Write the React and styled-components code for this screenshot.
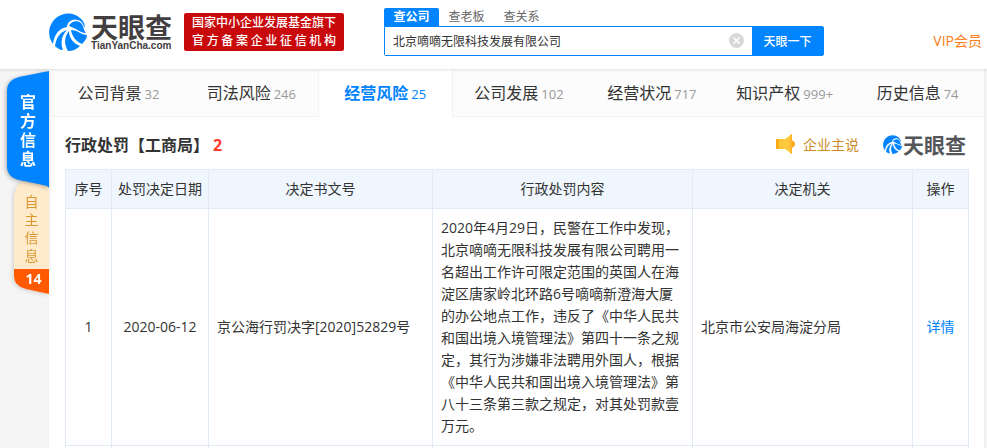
import styled, { createGlobalStyle } from "styled-components";

const GlobalStyle = createGlobalStyle`
* {
box-sizing: border-box;
}
body {
margin: 0;
background-color: #f5f5f5;
color: #333;
font-family: "Open Sans", "Noto Sans CJK SC", sans-serif;
font-size: 14px;
text-spacing-trim: space-all;
}
button, input {
font-family: inherit;
}
a {
text-decoration: none;
}
`;

const Page = styled.div`
min-height: 100vh;
display: flex;
flex-direction: column;
overflow: hidden;
`;

const Header = styled.header`
display: flex;
align-items: flex-start;
height: 69px;
padding: 8px 5px 0 49px;
background-color: white;
box-shadow: 0 1px 3px rgba(0, 0, 0, 0.12);
position: relative;
`;

const Logo = styled.a`
display: flex;
align-items: center;
gap: 4px;
height: 48px;
color: #433e3f;
`;

const LogoText = styled.span`
display: flex;
flex-direction: column;
`;

const LogoName = styled.span`
font-family: "Noto Sans CJK SC", sans-serif;
font-weight: 700;
font-size: ${props=>props.$size}px;
line-height: ${props=>props.$size}px;
`;

const LogoDomain = styled.span`
font-family: "Liberation Sans", sans-serif;
font-weight: 700;
font-size: 10px;
line-height: 12px;
`;

const Backing = styled.div`
width: 160px;
height: 38px;
margin: 5px 40px 0 12px;
padding: 1px 8px;
border-radius: 2px;
background-color: #c90a0d;
color: white;
font-size: 12px;
font-weight: 500;
line-height: 18px;
text-align-last: justify;
white-space: nowrap;
`;

const Search = styled.form`
width: 440px;
`;

const SearchTabs = styled.div`
display: flex;
`;

const SearchTab = styled.button`
width: 55px;
height: 18px;
padding: 0;
border: none;
border-radius: 2px 2px 0 0;
font-size: 12px;
line-height: 18px;
font-weight: ${props=>props.$active ? 700 : 400};
color: ${props=>props.$active ? "white" : "#666"};
background-color: ${props=>props.$active ? "#0084ff" : "transparent"};
`;

const SearchBar = styled.div`
display: flex;
height: 30px;
border: 1px solid #0084ff;
border-radius: 0 2px 2px 2px;
`;

const SearchInput = styled.input`
flex: 1;
min-width: 0;
padding: 0 8px;
border: none;
outline: none;
font-size: 12px;
color: #333;
`;

const ClearButton = styled.button`
display: flex;
align-items: center;
padding: 0 8px 2px 0;
border: none;
background: none;
`;

const SearchButton = styled.button`
width: 71px;
padding: 0;
border: none;
background-color: #0084ff;
color: white;
font-size: 12px;
font-weight: 500;
`;

const VipLink = styled.a`
margin: 22px 0 0 auto;
line-height: 22px;
color: #ff7d18;
`;

const Body = styled.div`
flex: 1;
display: flex;
padding-right: 2px;
`;

const Side = styled.aside`
width: 49px;
padding-top: 2px;
display: flex;
flex-direction: column;
align-items: flex-end;
`;

const TabShadow = styled.div`
position: relative;
z-index: ${props=>props.$front ? 1 : 0};
margin-top: ${props=>props.$front ? "0" : "-8px"};
filter: drop-shadow(-1px 1px 2px rgba(0, 0, 0, ${props=>props.$front ? 0.3 : 0.15}));
`;

const OfficialTab = styled.a`
width: 42px;
height: 117px;
padding-top: 22px;
display: flex;
flex-direction: column;
align-items: center;
background-color: #0084ff;
clip-path: path("M42 0 L12 6 Q0 9 0 20 V95 Q0 106 12 109 L36 114 Q41 115 42 117 Z");
color: white;
font-size: 16px;
font-weight: 700;
line-height: 19px;
`;

const OwnTab = styled.a`
width: 35px;
padding-top: 13px;
display: flex;
flex-direction: column;
align-items: center;
background-color: #ffebcc;
clip-path: path("M0 20 Q0 4 12 0 H35 V114 L12 109 Q0 106 0 96 Z");
color: #d8982f;
font-size: 14px;
line-height: 18px;
`;

const OwnCount = styled.b`
width: 35px;
height: 25px;
margin-top: 4px;
padding-left: 4px;
background-color: #ff5a00;
color: white;
font-size: 14px;
line-height: 20px;
text-align: center;
`;

const Main = styled.main`
flex: 1;
min-width: 0;
background-color: white;
border-right: 1px solid #eee;
`;

const Tabs = styled.nav`
display: flex;
height: 48px;
padding-left: 3px;
background-color: #fcfcfc;
`;

const Tab = styled.a`
flex: 1;
display: flex;
align-items: baseline;
justify-content: center;
gap: 3px;
white-space: nowrap;
font-size: 16px;
line-height: 48px;
color: ${props=>props.$active ? "#0084ff" : "#333"};
font-weight: ${props=>props.$active ? 700 : 400};
background-color: ${props=>props.$active ? "white" : "#fcfcfc"};
border: solid #f2f2f2;
border-width: ${props=>props.$active ? "0 1px" : "0 0 1px"};
`;

const TabCount = styled.span`
font-size: 13px;
font-weight: 400;
color: ${props=>props.$active ? "#0084ff" : "#999"};
`;

const Section = styled.section`
padding: 0 15px 0 16px;
`;

const SectionHead = styled.div`
display: flex;
align-items: center;
height: 52px;
padding-top: 2px;
`;

const Title = styled.h2`
margin: 0 auto 0 0;
font-size: 16px;
font-weight: 700;
`;

const TitleCount = styled.span`
margin-left: 4px;
color: #ff3b30;
`;

const Speak = styled.a`
display: flex;
align-items: center;
gap: 8px;
margin-right: 24px;
color: #cc8a1f;
`;

const SmallLogo = styled.span`
display: flex;
align-items: center;
gap: 1px;
margin-right: 3px;
color: #55565a;
`;

const Table = styled.table`
width: 100%;
table-layout: fixed;
border-collapse: collapse;
line-height: 22px;
`;

const Col = styled.col`
width: ${props=>props.$width};
`;

const Th = styled.th`
height: 39px;
padding: 0;
border: 1px solid #e0ebf5;
background-color: #eff6fd;
font-weight: 400;
`;

const Td = styled.td`
padding: 8px;
border: 1px solid #e0ebf5;
text-align: ${props=>props.$center ? "center" : "left"};
`;

const OpenTd = styled.td`
height: 2px;
padding: 0;
border: solid #e0ebf5;
border-width: 0 1px;
`;

const DetailLink = styled.a`
color: #0084ff;
`;

const navTabs = [
    { name: "公司背景", count: "32" },
    { name: "司法风险", count: "246" },
    { name: "经营风险", count: "25", active: true },
    { name: "公司发展", count: "102" },
    { name: "经营状况", count: "717" },
    { name: "知识产权", count: "999+" },
    { name: "历史信息", count: "74" },
];

const columns = [
    { name: "序号", width: "46px" },
    { name: "处罚决定日期", width: "97px" },
    { name: "决定书文号", width: "224px" },
    { name: "行政处罚内容", width: "auto" },
    { name: "决定机关", width: "220px" },
    { name: "操作", width: "56px" },
];

const penalties = [
    {
        id: 1,
        date: "2020-06-12",
        number: "京公海行罚决字[2020]52829号",
        content: "2020年4月29日，民警在工作中发现，北京嘀嘀无限科技发展有限公司聘用一名超出工作许可限定范围的英国人在海淀区唐家岭北环路6号嘀嘀新澄海大厦的办公地点工作，违反了《中华人民共和国出境入境管理法》第四十一条之规定，其行为涉嫌非法聘用外国人，根据《中华人民共和国出境入境管理法》第八十三条第三款之规定，对其处罚款壹万元。",
        office: "北京市公安局海淀分局",
    },
];

const LogoMark = ({ size }) => (
    <svg width={size} height={size} viewBox="0 0 38 38" aria-hidden="true">
        <path d="M31 5 C25 -1 14 -1 7 5 C-1 12 -2 23 4 31 C5 22 10 15 18 14 C18 9 24 5 29 7 C33 8 35 12 35 15 C37 12 34 7 31 5 Z" fill="#0084ff" />
        <path d="M20 13 C22 8 28 7 32 10 C35 13 34 17 37 20 C31 20 27 15 20 13 Z" fill="#0084ff" />
        <path d="M18 17 C11 19 7 25 6 33 C8 35 11 37 14 37 C11 29 13 22 18 17 Z" fill="#0084ff" />
        <path d="M20 18 C15 24 15 31 19 38 C24 38 28 36 31 33 C24 30 20 25 20 18 Z" fill="#0084ff" />
        <path d="M22 17 C23 24 28 29 33 31 C36 28 38 25 38 22 C32 22 29 17 22 17 Z" fill="#0084ff" />
    </svg>
);

const App = () => {
    return (
        <Page>
            <GlobalStyle />
            <Header>
                <Logo href="#">
                    <LogoMark size={38} />
                    <LogoText>
                        <LogoName $size={27}>天眼查</LogoName>
                        <LogoDomain>TianYanCha.com</LogoDomain>
                    </LogoText>
                </Logo>
                <Backing>
                    <div>国家中小企业发展基金旗下</div>
                    <div>官方备案企业征信机构</div>
                </Backing>
                <Search>
                    <SearchTabs>
                        <SearchTab type="button" $active>查公司</SearchTab>
                        <SearchTab type="button">查老板</SearchTab>
                        <SearchTab type="button">查关系</SearchTab>
                    </SearchTabs>
                    <SearchBar>
                        <SearchInput aria-label="查公司" defaultValue="北京嘀嘀无限科技发展有限公司" />
                        <ClearButton type="reset" aria-label="清空">
                            <svg width="15" height="15" viewBox="0 0 15 15">
                                <circle cx="7.5" cy="7.5" r="7.5" fill="#d8d8d8" />
                                <path d="M4.5 4.5 L10.5 10.5 M10.5 4.5 L4.5 10.5" stroke="white" strokeWidth="1.6" />
                            </svg>
                        </ClearButton>
                        <SearchButton>天眼一下</SearchButton>
                    </SearchBar>
                </Search>
                <VipLink href="#">VIP会员</VipLink>
            </Header>
            <Body>
                <Side>
                    <TabShadow $front>
                        <OfficialTab href="#">
                            {[..."官方信息"].map((char)=>(
                                <span key={char}>{char}</span>
                            ))}
                        </OfficialTab>
                    </TabShadow>
                    <TabShadow>
                        <OwnTab href="#">
                            {[..."自主信息"].map((char)=>(
                                <span key={char}>{char}</span>
                            ))}
                            <OwnCount>14</OwnCount>
                        </OwnTab>
                    </TabShadow>
                </Side>
                <Main>
                    <Tabs>
                        {navTabs.map((tab)=>(
                            <Tab href="#" key={tab.name} $active={tab.active}>
                                {tab.name}
                                <TabCount $active={tab.active}>{tab.count}</TabCount>
                            </Tab>
                        ))}
                    </Tabs>
                    <Section>
                        <SectionHead>
                            <Title>行政处罚【工商局】<TitleCount>2</TitleCount></Title>
                            <Speak href="#">
                                <svg width="20" height="20" viewBox="0 0 20 20" aria-hidden="true">
                                    <path d="M16 6 Q20 7 20 10 Q20 13 16 14 Z" fill="#ffa916" />
                                    <path d="M1 5 H10 L17 0 V20 L10 15 H1 Z" fill="#ffc93c" />
                                    <path d="M1 5 H4 V15 H1 Z" fill="#ffab1a" />
                                    <path d="M15 1 L17 0 V20 L15 19 Z" fill="#ffb52a" />
                                </svg>
                                企业主说
                            </Speak>
                            <SmallLogo>
                                <LogoMark size={19} />
                                <LogoName $size={21}>天眼查</LogoName>
                            </SmallLogo>
                        </SectionHead>
                        <Table>
                            <colgroup>
                                {columns.map((column)=>(
                                    <Col key={column.name} $width={column.width} />
                                ))}
                            </colgroup>
                            <thead>
                                <tr>
                                    {columns.map((column)=>(
                                        <Th key={column.name}>{column.name}</Th>
                                    ))}
                                </tr>
                            </thead>
                            <tbody>
                                {penalties.map((item)=>(
                                    <tr key={item.id}>
                                        <Td $center>{item.id}</Td>
                                        <Td $center>{item.date}</Td>
                                        <Td>{item.number}</Td>
                                        <Td>{item.content}</Td>
                                        <Td>{item.office}</Td>
                                        <Td $center><DetailLink href="#">详情</DetailLink></Td>
                                    </tr>
                                ))}
                                <tr>
                                    {columns.map((column)=>(
                                        <OpenTd key={column.name} />
                                    ))}
                                </tr>
                            </tbody>
                        </Table>
                    </Section>
                </Main>
            </Body>
        </Page>
    )
}

export default App
